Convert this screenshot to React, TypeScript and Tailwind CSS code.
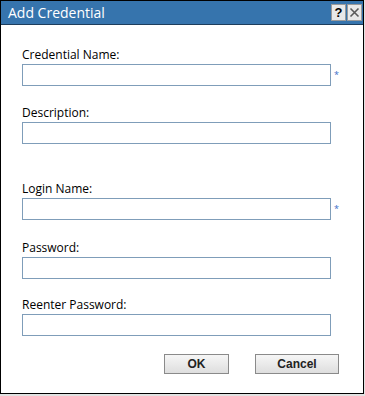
import React from "react";

const fields = [
  { label: "Credential Name:", required: true, top: "mt-[23px]" },
  { label: "Description:", required: false, top: "mt-[20px]" },
  { label: "Login Name:", required: true, top: "mt-[38px]" },
  { label: "Password:", required: false, top: "mt-[21px]" },
  { label: "Reenter Password:", required: false, top: "mt-[19px]" },
];

function Field({ label, required, top }: { label: string; required: boolean; top: string }) {
  return (
    <div className={`${top} flex flex-col`}>
      <label className="h-[14px] text-[12px] font-medium leading-[14px] text-black">{label}</label>
      <div className="mt-[2px] flex items-start">
        <input
          type="text"
          className="h-[22px] w-[309px] border border-[#7f9db9] bg-white outline-none"
        />
        {required && (
          <span className="ml-[3px] mt-[6px] text-[9px] leading-[10px] text-[#3a6cc8]">*</span>
        )}
      </div>
    </div>
  );
}

export default function App() {
  return (
    <div className="h-[396px] w-[365px] bg-[#e2e2e2]" style={{ fontFamily: '"Open Sans", "Noto Sans", sans-serif' }}>
      <div className="flex h-[394px] w-[364px] flex-col border border-black bg-white">
        {/* title bar */}
        <div className="flex h-[24px] shrink-0 items-center justify-between border-b border-[#1d3d5c] bg-[#3674ad] pl-[7px] pr-[1px]">
          <span className="text-[14px] font-medium leading-none text-white">Add Credential</span>
          <div className="flex gap-[1px]">
            <button className="flex h-[17px] w-[15px] items-center justify-center border border-[#9a9a9a] bg-[#e9e9e9] text-[13px] font-bold leading-none text-black" style={{ fontFamily: '"Liberation Sans", Arial, sans-serif' }}>
              ?
            </button>
            <button className="flex h-[17px] w-[15px] items-center justify-center border border-[#9a9a9a] bg-[#e9e9e9]">
              <svg width="11" height="11" viewBox="0 0 11 11">
                <path d="M1.5 1.5 L9.5 9.5 M9.5 1.5 L1.5 9.5" stroke="#5a5a5a" strokeWidth="1.6" />
              </svg>
            </button>
          </div>
        </div>

        {/* form */}
        <div className="flex flex-col pl-[21px]">
          {fields.map((f) => (
            <Field key={f.label} label={f.label} required={f.required} top={f.top} />
          ))}
        </div>

        {/* buttons */}
        <div
          className="mt-[18px] flex justify-end gap-[26px] pr-[24px]"
          style={{ fontFamily: '"Liberation Sans", Arial, sans-serif' }}
        >
          <button className="h-[20px] w-[65px] border border-[#8a8a8a] bg-gradient-to-b from-[#f6f6f6] to-[#dedede] text-[12px] font-bold leading-none text-[#222]">
            OK
          </button>
          <button className="h-[20px] w-[84px] border border-[#8a8a8a] bg-gradient-to-b from-[#f6f6f6] to-[#dedede] text-[12px] font-bold leading-none text-[#222]">
            Cancel
          </button>
        </div>
      </div>
    </div>
  );
}
